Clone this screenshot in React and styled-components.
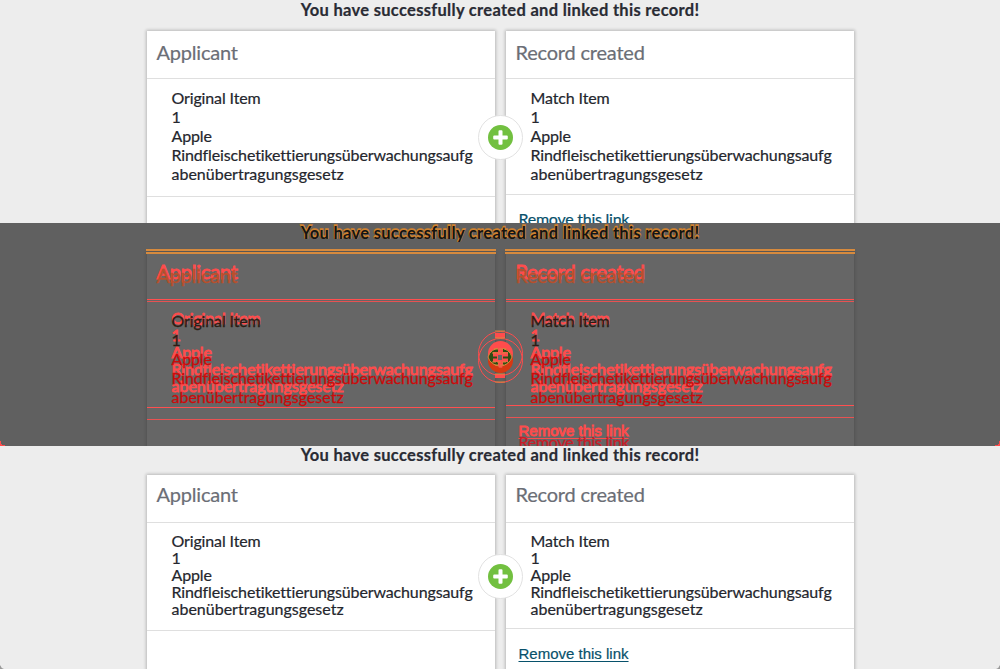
import React from "react";
import styled, { createGlobalStyle, ThemeProvider, css } from "styled-components";

const Global = createGlobalStyle`
  * { box-sizing: border-box; }
  body { margin: 0; overflow: hidden; background: #ededed; }
`;

const plain = {
  bg: "#ededed", card: "#fff", line: "#dfdfdf", shadow: "0 0 3px 1px rgba(0,0,0,.22)",
  title: "#292b34", header: "#6b6e76", first: "#24262d", text: "#24262d", link: "#07516b",
  ring: "#e2e2e2", disc: "#fff", icon: "#72c040", plus: "#fff", stroke: "0.2px", titleStroke: "0.2px",
};
const added = {
  ...plain, bg: "#606060", card: "#666", line: "#ff4f4f", shadow: "0 0 3px 1px rgba(0,0,0,.14)",
  title: "#d0822e", header: "#ff4c4c", first: "#ff4c4c", text: "#ff4c4c", link: "#ff4c4c",
  ring: "#ff4c4c", disc: "transparent", icon: "#ff4c4c", plus: "#d68a3e", stroke: "0.9px", titleStroke: "1.6px",
};
const removed = {
  ...plain, bg: "transparent", card: "transparent", line: "#e85252", shadow: "none",
  title: "#141414", header: "#b8502c", first: "#2c1c14", text: "#cc0a0a", link: "#c91c28",
  ring: "#ff4c4c", disc: "transparent", icon: "#d63812", plus: "#ff4c4c", stroke: "0.3px", titleStroke: "0",
};

const before = { title: 21, top: 31, head: 47, headText: 43, body: 118, footer: 116, pad: 9, line: 19, icon: 115, linkTop: 14, linkFont: "Lato", linkSize: 16, linkSpace: -0.25 };
const after = { title: 19, top: 29, head: 47, headText: 39, body: 108, footer: 106, pad: 9, line: 17, icon: 108, linkTop: 15, linkFont: "Liberation Sans", linkSize: 15, linkSpace: 0 };

const Page = styled.main`
  display: grid;
  grid-template-rows: repeat(3, 223px);
  width: 1000px;
  height: 669px;
  font-family: Lato, "Open Sans", sans-serif;
  font-variant-ligatures: none;
`;
const Frame = styled.section`
  position: relative;
  overflow: hidden;
`;
const Overlay = styled.div`
  position: absolute;
  inset: 0;
`;
const Scene = styled.div`
  height: 223px;
  overflow: hidden;
  background: ${(p) => p.theme.bg};
  display: flex;
  flex-direction: column;
  align-items: center;
`;
const Title = styled.h1`
  margin: 0;
  flex: none;
  height: ${(p) => p.theme.m.top}px;
  line-height: ${(p) => p.theme.m.title}px;
  font-size: 16.5px;
  font-weight: 700;
  letter-spacing: 0.3px;
  white-space: nowrap;
  color: ${(p) => p.theme.title};
  -webkit-text-stroke: ${(p) => p.theme.titleStroke} ${(p) => p.theme.title};
`;
const Cards = styled.div`
  position: relative;
  flex: none;
  display: grid;
  grid-template-columns: 348px 348px;
  gap: 11px;
  margin-left: 1px;
`;
const Card = styled.article`
  height: 230px;
  background: ${(p) => p.theme.card};
  box-shadow: ${(p) => p.theme.shadow};
`;
const CardTitle = styled.h2`
  margin: 0;
  padding-left: 9.5px;
  height: ${(p) => p.theme.m.head + 1}px;
  line-height: ${(p) => p.theme.m.headText}px;
  border-bottom: 1px solid ${(p) => p.theme.line};
  font-size: 20px;
  font-weight: 400;
  letter-spacing: -0.2px;
  color: ${(p) => p.theme.header};
  -webkit-text-stroke: ${(p) => p.theme.stroke} ${(p) => p.theme.header};
`;
const Item = styled.div`
  height: ${(p) => (p.$linked ? p.theme.m.footer : p.theme.m.body)}px;
  padding: ${(p) => p.theme.m.pad}px 0 0 24.5px;
  border-bottom: 1px solid ${(p) => p.theme.line};
`;
const Line = styled.div`
  line-height: ${(p) => p.theme.m.line}px;
  font-size: 16px;
  letter-spacing: ${(p) => (p.$last ? 0 : -0.13)}px;
  white-space: nowrap;
  color: ${(p) => (p.$first ? p.theme.first : p.theme.text)};
  -webkit-text-stroke: ${(p) => p.theme.stroke} ${(p) => (p.$first ? p.theme.first : p.theme.text)};
`;
const Link = styled.a`
  display: inline-block;
  margin: ${(p) => p.theme.m.linkTop}px 0 0 12.5px;
  font-family: "${(p) => p.theme.m.linkFont}", sans-serif;
  font-size: ${(p) => p.theme.m.linkSize}px;
  letter-spacing: ${(p) => p.theme.m.linkSpace}px;
  line-height: 20px;
  text-decoration: underline;
  text-underline-offset: 2px;
  color: ${(p) => p.theme.link};
  -webkit-text-stroke: ${(p) => p.theme.stroke} ${(p) => p.theme.link};
`;
const Badge = styled.div`
  position: absolute;
  left: 331px;
  top: ${(p) => p.theme.m.icon - p.theme.m.top}px;
  width: 45px;
  height: 45px;
  display: grid;
  place-items: center;
  border: 1px solid ${(p) => p.theme.ring};
  border-radius: 50%;
  background: ${(p) => p.theme.disc};
`;
const PlusIcon = styled.svg`
  width: 25px;
  height: 25px;
  margin-right: 1px;
  .disc { fill: ${(p) => p.theme.icon}; }
  .plus { fill: ${(p) => p.theme.plus}; }
`;
const BadgeDifference = styled.svg`
  position: absolute;
  left: 475px;
  top: 105px;
`;
const EdgeLine = styled.div`
  position: absolute;
  top: ${(p) => p.$top}px;
  left: ${(p) => p.$left}px;
  width: ${(p) => p.$width}px;
  height: 2px;
  background: #d68a3e;
`;
const Corner = styled.svg`
  position: absolute;
  bottom: 0;
  ${(p) => (p.$right ? css`right: 0; transform: scaleX(-1);` : css`left: 0;`)}
`;

const lines = ["1", "Apple", "Rindfleischetikettierungsüberwachungsaufg", "abenübertragungsgesetz"];

function RecordCard({ title, name, linked }) {
  return (
    <Card>
      <CardTitle>{title}</CardTitle>
      <Item $linked={linked}>
        <Line $first>{name}</Line>
        {lines.map((text, i) => <Line key={text} $first={i === 0} $last={i === 3}>{text}</Line>)}
      </Item>
      {linked && <Link>Remove this link</Link>}
    </Card>
  );
}

function LinkedRecords({ palette, metrics }) {
  return (
    <ThemeProvider theme={{ ...palette, m: metrics }}>
      <Scene>
        <Title>You have successfully created and linked this record!</Title>
        <Cards>
          <RecordCard title="Applicant" name="Original Item" />
          <RecordCard title="Record created" name="Match Item" linked />
          <Badge>
            <PlusIcon viewBox="0 0 25 25">
              <circle className="disc" cx="12.5" cy="12.5" r="12.5" />
              <path className="plus" d="M11.5 5.2h2q1 0 1 1v4.3h4.3q1 0 1 1v2q0 1-1 1h-4.3v4.3q0 1-1 1h-2q-1 0-1-1v-4.3H6.2q-1 0-1-1v-2q0-1 1-1h4.3V6.2q0-1 1-1z" />
            </PlusIcon>
          </Badge>
        </Cards>
      </Scene>
    </ThemeProvider>
  );
}

export default function App() {
  return (
    <Page>
      <Global />
      <Frame><LinkedRecords palette={plain} metrics={before} /></Frame>
      <Frame>
        <LinkedRecords palette={added} metrics={after} />
        <Overlay><LinkedRecords palette={removed} metrics={before} /></Overlay>
        <BadgeDifference width="50" height="58">
          <path d="M20 5h10v5H20zM20 46h10v4H20z" fill="#ff4c4c" />
          <path d="M20 3h10M20 10h10M20 46h10M20 54h10" stroke="#d68a3e" />
          <path d="M13 29A12.5 12.5 0 0 1 37 29A12.5 12.5 0 0 1 13 29Z" fill="#2f4d14" stroke="#d68a3e" />
          <path d="M23 18h5v6h5v10h-5v4h-5v-4h-5V24h5z" fill="#ff4c4c" />
          <path d="M17 25h16M17 34h16M19 21h12M20 37h10" stroke="#d68a3e" strokeDasharray="4 1" />
          <path d="M18 29.5h4M28 29.5h5" stroke="#2f4d14" strokeWidth="2" />
          <path d="M23 27h4v5h-4z" fill="#666" />
        </BadgeDifference>
        {[[146, 350], [505, 350]].map(([left, width]) => (
          <React.Fragment key={left}>
            <EdgeLine $top={26} $left={left} $width={width} />
            <EdgeLine $top={29} $left={left} $width={width} />
          </React.Fragment>
        ))}
        <Corner width="5" height="5"><path d="M0 0h1v3h1v1h3v1H0z" fill="#ff4c4c" /></Corner>
        <Corner $right width="5" height="5"><path d="M0 0h1v3h1v1h3v1H0z" fill="#ff4c4c" /></Corner>
      </Frame>
      <Frame>
        <LinkedRecords palette={plain} metrics={after} />
        <Corner width="4" height="4"><path d="M0 0v4h4Q1 3 0 0z" fill="#999" /></Corner>
        <Corner $right width="4" height="4"><path d="M0 0v4h4Q1 3 0 0z" fill="#999" /></Corner>
      </Frame>
    </Page>
  );
}
